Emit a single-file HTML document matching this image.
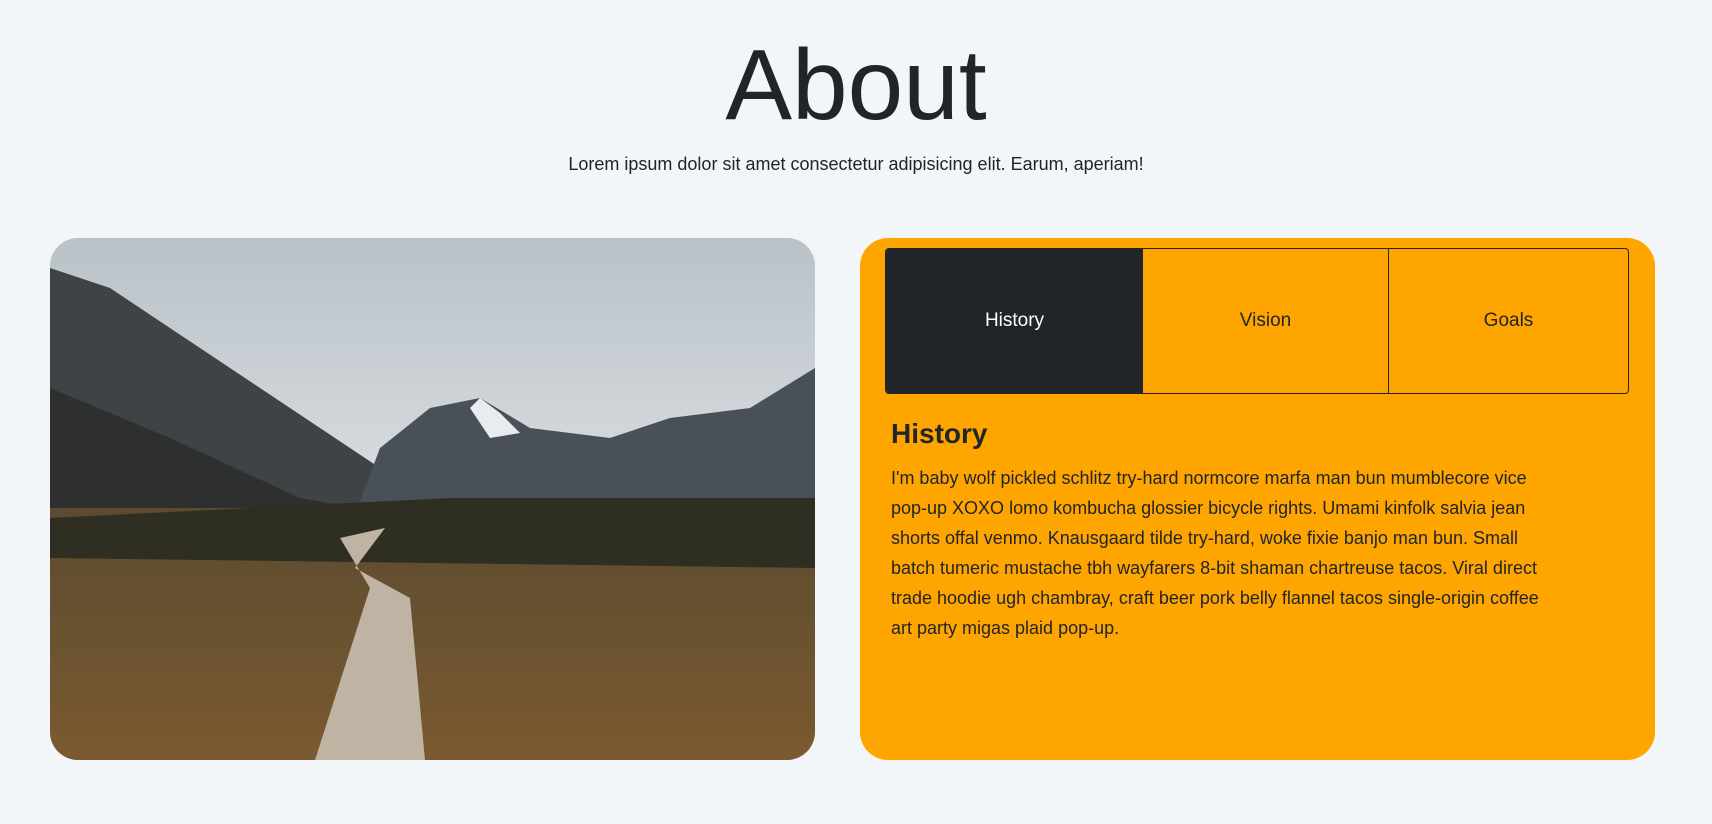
<!DOCTYPE html>
<html><head><meta charset="utf-8"><style>
body{margin:0;background:#f2f6f9;font-family:"Liberation Sans",sans-serif;color:#212529;width:1712px;height:824px;overflow:hidden;position:relative}
h1{position:absolute;top:25px;left:0;width:1712px;text-align:center;margin:0;font-weight:300;font-size:100px;line-height:120px}
.sub{position:absolute;top:154px;width:1712px;text-align:center;font-size:18px}
.img{position:absolute;left:50px;top:238px;width:765px;height:522px;border-radius:28px;overflow:hidden}
.card{position:absolute;left:860px;top:238px;width:795px;height:522px;background:#ffa500;border-radius:28px}
.tabs{position:absolute;left:25px;top:10px;width:742px;height:144px;border:1px solid #212529;border-radius:4px;display:flex;overflow:hidden}
.tabs div{display:flex;align-items:center;justify-content:center;font-size:19px}
.t1{width:257px;background:#212529;color:#fff}
.t2{width:245px;border-right:1px solid #212529}
.t3{flex:1}
h3{position:absolute;left:31px;top:180px;margin:0;font-size:28px;font-weight:600}
p{position:absolute;left:31px;top:225px;width:672px;margin:0;font-size:18px;line-height:30px}
</style></head><body>
<h1>About</h1>
<div class="sub">Lorem ipsum dolor sit amet consectetur adipisicing elit. Earum, aperiam!</div>
<div class="img"><svg width="765" height="522" viewBox="0 0 765 522">
<defs><linearGradient id="s" x1="0" y1="0" x2="0" y2="1"><stop offset="0" stop-color="#b9c2c8"/><stop offset="0.5" stop-color="#d9dde0"/><stop offset="1" stop-color="#a8bccb"/></linearGradient>
<linearGradient id="g" x1="0" y1="0" x2="0" y2="1"><stop offset="0" stop-color="#5a4a30"/><stop offset="1" stop-color="#7a5a30"/></linearGradient></defs>
<rect width="765" height="522" fill="url(#s)"/>
<path d="M0 30 L60 50 L150 110 L240 170 L330 230 L390 270 L0 300Z" fill="#3f4346"/>
<path d="M330 210 L380 170 L430 160 L480 190 L560 200 L620 180 L700 170 L765 130 L765 290 L300 290Z" fill="#4a5058"/>
<path d="M420 170 L430 160 L450 175 L470 195 L440 200Z" fill="#e8ecef"/>
<path d="M0 150 L120 200 L250 260 L420 290 L0 300Z" fill="#2e3030"/>
<path d="M0 270 L300 270 L500 270 L765 260 L765 522 L0 522Z" fill="url(#g)"/>
<path d="M0 320 L765 330 L765 260 L400 260 L0 280Z" fill="#2f2e22"/>
<path d="M265 522 L320 350 L290 300 L335 290 L305 330 L360 360 L375 522Z" fill="#bfb3a3"/>
</svg></div>
<div class="card">
<div class="tabs"><div class="t1">History</div><div class="t2">Vision</div><div class="t3">Goals</div></div>
<h3>History</h3>
<p>I'm baby wolf pickled schlitz try-hard normcore marfa man bun mumblecore vice pop-up XOXO lomo kombucha glossier bicycle rights. Umami kinfolk salvia jean shorts offal venmo. Knausgaard tilde try-hard, woke fixie banjo man bun. Small batch tumeric mustache tbh wayfarers 8-bit shaman chartreuse tacos. Viral direct trade hoodie ugh chambray, craft beer pork belly flannel tacos single-origin coffee art party migas plaid pop-up.</p>
</div>
</body></html>
